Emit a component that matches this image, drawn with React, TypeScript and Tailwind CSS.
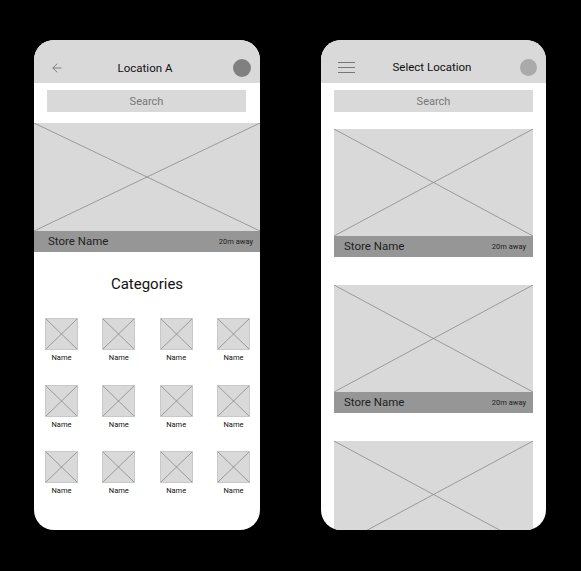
import { ArrowLeft } from "lucide-react";

// crossed-box placeholder used for every image slot
function Placeholder({ className = "" }: { className?: string }) {
  return (
    <div className={`relative bg-[#d9d9d9] ${className}`}>
      <svg className="absolute inset-0 h-full w-full" viewBox="0 0 100 100" preserveAspectRatio="none">
        <line x1="0" y1="0" x2="100" y2="100" stroke="#8a8a8a" strokeWidth="0.8" vectorEffect="non-scaling-stroke" />
        <line x1="100" y1="0" x2="0" y2="100" stroke="#8a8a8a" strokeWidth="0.8" vectorEffect="non-scaling-stroke" />
      </svg>
    </div>
  );
}

function StoreCard({ className = "", imgClass = "h-[107px]", pad = "pl-[10px]" }: { className?: string; imgClass?: string; pad?: string }) {
  return (
    <div className={`flex flex-col ${className}`}>
      <Placeholder className={`w-full ${imgClass}`} />
      <div className={`flex h-[21px] items-center justify-between bg-[#969696] pr-[7px] ${pad}`}>
        <span className="text-[11.5px] text-[#222]">Store Name</span>
        <span className="text-[7.5px] text-[#222]">20m away</span>
      </div>
    </div>
  );
}

function SearchBar({ className = "" }: { className?: string }) {
  return (
    <div className={`flex h-[22px] items-center justify-center bg-[#d9d9d9] pt-[2px] text-[11px] text-[#777] ${className}`}>Search</div>
  );
}

function CategoryRow({ className = "" }: { className?: string }) {
  return (
    <div className={`flex justify-between pl-[11px] pr-[10px] ${className}`}>
      {[0, 1, 2, 3].map((i) => (
        <div key={i} className="flex w-[33px] flex-col items-center">
          <Placeholder className="h-[32px] w-[33px] border border-[#c8c8c8]" />
          <div className="mt-[3px] text-[7.5px] leading-[10px] text-[#111]">Name</div>
        </div>
      ))}
    </div>
  );
}

export default function App() {
  return (
    <div className="flex h-[571px] w-[581px] gap-[61px] bg-black pl-[34px] pt-[40px] font-['Roboto',sans-serif]">
      {/*--- location screen ---*/}
      <div className="flex h-[490px] w-[226px] flex-col overflow-hidden rounded-[20px] bg-white">
        <div className="grid h-[43px] flex-none grid-cols-[1fr_auto_1fr] items-center bg-[#d9d9d9] pl-[16px] pr-[9px] pt-[12px]">
          <ArrowLeft size={14} strokeWidth={1.3} color="#666" />
          <span className="mr-[11px] pt-[2px] text-[11.5px] text-[#111]">Location A</span>
          <div className="h-[18px] w-[18px] justify-self-end rounded-full bg-[#808080]" />
        </div>
        <SearchBar className="mx-[13px] mt-[7px] w-[199px]" />
        <div className="mt-[11px]">
          <StoreCard imgClass="h-[108px]" pad="pl-[14px]" />
        </div>
        <div className="mt-[22px] text-center text-[15px] leading-[20px] text-[#111]">Categories</div>
        <CategoryRow className="mt-[24px]" />
        <CategoryRow className="mt-[22px]" />
        <CategoryRow className="mt-[21px]" />
      </div>

      {/*--- select location screen ---*/}
      <div className="flex h-[490px] w-[225px] flex-col overflow-hidden rounded-[20px] bg-white">
        <div className="grid h-[43px] flex-none grid-cols-[1fr_auto_1fr] items-center bg-[#d9d9d9] pl-[17px] pr-[9px] pt-[12px]">
          <div className="flex w-[17px] flex-col gap-[4px]">
            <div className="h-px bg-[#777]" />
            <div className="h-px bg-[#777]" />
            <div className="h-px bg-[#777]" />
          </div>
          <span className="mr-[11px] pt-[1px] text-[11.5px] text-[#111]">Select Location</span>
          <div className="h-[17px] w-[17px] justify-self-end rounded-full bg-[#aaaaaa]" />
        </div>
        <div className="flex flex-col px-[13px]">
          <SearchBar className="mt-[7px] w-[199px]" />
          <StoreCard className="mt-[17px]" />
          <StoreCard className="mt-[28px]" />
          <Placeholder className="mt-[28px] h-[107px] w-full flex-none" />
        </div>
      </div>
    </div>
  );
}
